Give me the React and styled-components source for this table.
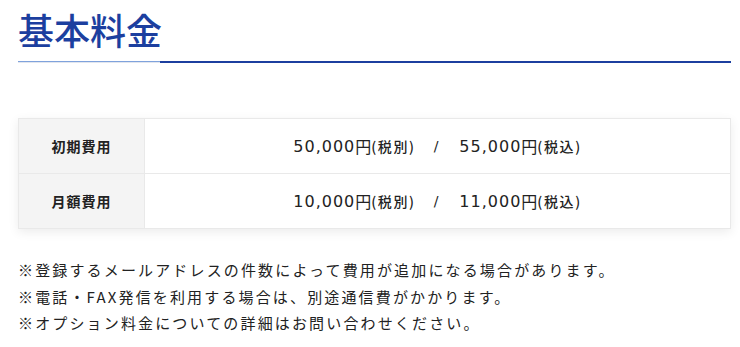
import React from 'react';
import styled, { createGlobalStyle } from 'styled-components';

const GlobalStyle = createGlobalStyle`
	html, body {
		margin: 0;
		padding: 0;
		background: #fff;
	}
	body {
		font-family: 'Noto Sans CJK JP', 'Noto Sans', sans-serif;
		color: #222;
	}
`;

const PRICES = [
	{ label: '初期費用', excl: '50,000', incl: '55,000' },
	{ label: '月額費用', excl: '10,000', incl: '11,000' },
];

const NOTES = [
	'※登録するメールアドレスの件数によって費用が追加になる場合があります。',
	'※電話・FAX発信を利用する場合は、別途通信費がかかります。',
	'※オプション料金についての詳細はお問い合わせください。',
];

const Section = styled.section`
	padding: 0 9px 0 18px;
`;

const Title = styled.h2`
	margin: 0;
	padding-top: 7px;
	font-size: 36px;
	line-height: 44px;
	font-weight: 500;
	color: #1c3f9f;
	letter-spacing: 0;
`;

const Rule = styled.div`
	display: grid;
	grid-template-columns: 142px 1fr;
	align-items: start;
	margin-top: 9px;
	height: 3px;
`;

const RuleLight = styled.span`
	height: 2px;
	margin-top: 1px;
	background: linear-gradient(#7fa2dc 0 50%, #e2e6ee 50% 100%);
`;

const RuleDark = styled.span`
	height: 2px;
	margin-top: 1px;
	background: #1c3f9f;
`;

const Table = styled.div`
	margin-top: 55px;
	border: 1px solid #e9e9e9;
	box-shadow: 0 3px 10px rgba(0, 0, 0, 0.08);
	background: #fff;
`;

const Row = styled.div`
	display: grid;
	grid-template-columns: 126px 1fr;
	height: 54px;
	border-top: ${p => (p.$first ? 'none' : '1px solid #e9e9e9')};
`;

const Head = styled.div`
	display: flex;
	align-items: center;
	justify-content: center;
	background: #f4f4f4;
	border-right: 1px solid #e9e9e9;
	font-size: 14px;
	font-weight: 700;
	letter-spacing: 1px;
	color: #222;
`;

const Value = styled.div`
	display: flex;
	align-items: center;
	justify-content: center;
	font-family: 'DejaVu Sans', 'Noto Sans CJK JP', sans-serif;
	font-size: 16px;
	letter-spacing: 1px;
	color: #222;
	white-space: pre;
`;

const Yen = styled.span`
	font-family: 'Noto Sans CJK JP', sans-serif;
	font-size: 16px;
	letter-spacing: 0;
`;

const Tax = styled.span`
	font-family: 'Noto Sans CJK JP', sans-serif;
	font-size: 14px;
	font-weight: 500;
	letter-spacing: 1.6px;
`;

const Slash = styled.span`
	padding: 0 20px 0 18px;
	font-size: 14px;
`;

const Notes = styled.ul`
	list-style: none;
	margin: 28px 0 0;
	padding: 0;
`;

const Note = styled.li`
	font-size: 15px;
	line-height: 26.5px;
	letter-spacing: 2.15px;
	color: #222;
`;

const App = () => (
	<>
		<GlobalStyle />
		<Section>
			<Title>基本料金</Title>
			<Rule>
				<RuleLight />
				<RuleDark />
			</Rule>
			<Table>
				{PRICES.map((p, i) => (
					<Row key={p.label} $first={i === 0}>
						<Head>{p.label}</Head>
						<Value>
							{p.excl}
							<Yen>円</Yen>
							<Tax>(税別)</Tax>
							<Slash>/</Slash>
							{p.incl}
							<Yen>円</Yen>
							<Tax>(税込)</Tax>
						</Value>
					</Row>
				))}
			</Table>
			<Notes>
				{NOTES.map(n => (
					<Note key={n}>{n}</Note>
				))}
			</Notes>
		</Section>
	</>
);

export default App;
